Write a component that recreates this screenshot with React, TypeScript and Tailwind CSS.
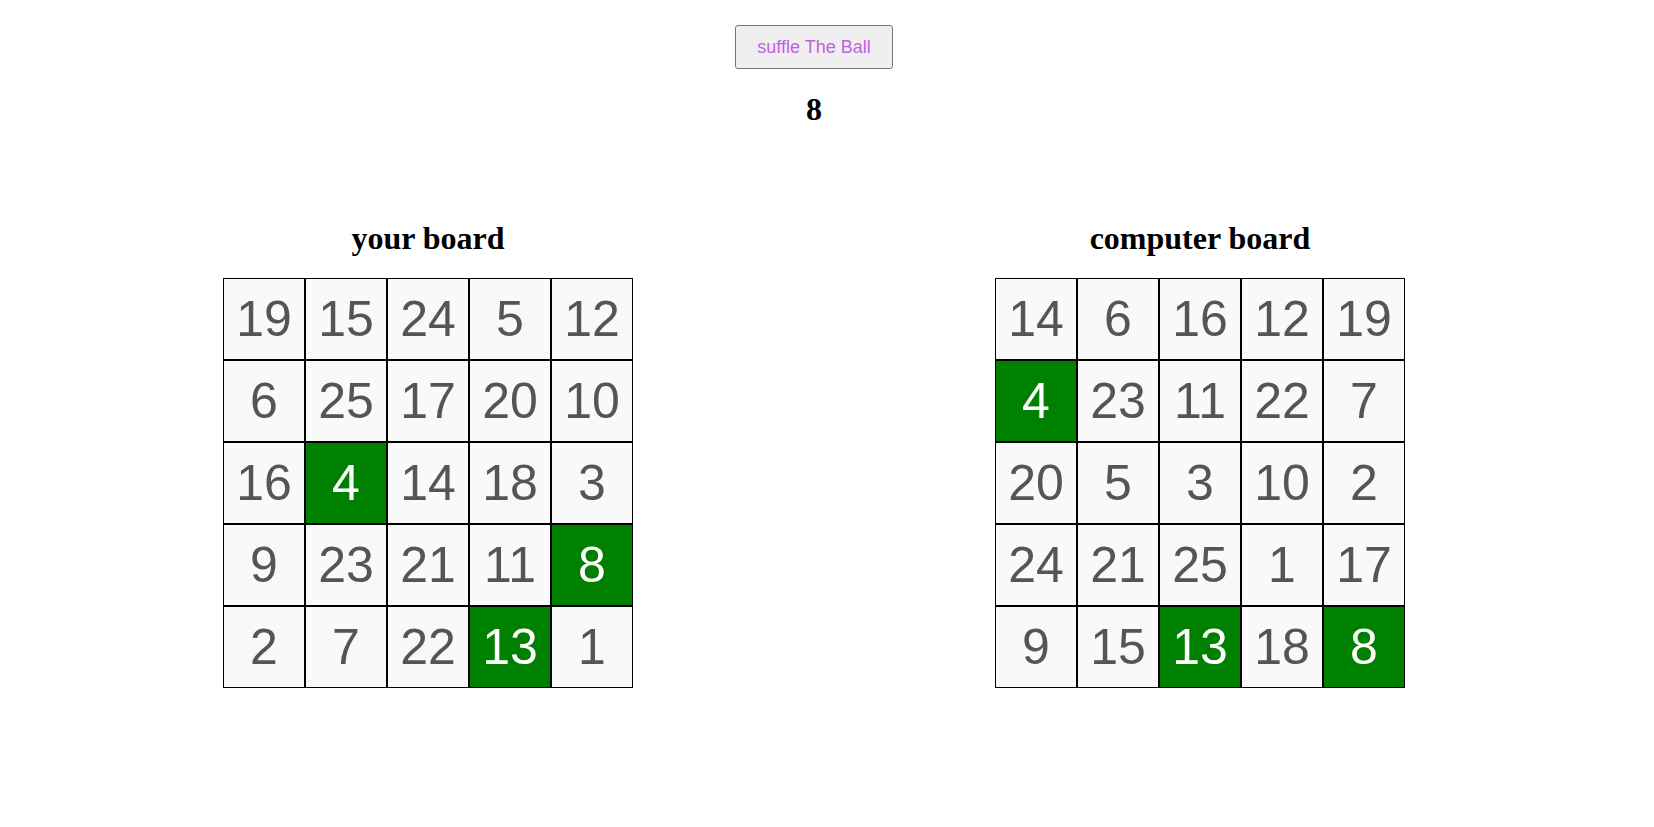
const yourBoard = [
  [19, 15, 24, 5, 12],
  [6, 25, 17, 20, 10],
  [16, 4, 14, 18, 3],
  [9, 23, 21, 11, 8],
  [2, 7, 22, 13, 1],
];

const computerBoard = [
  [14, 6, 16, 12, 19],
  [4, 23, 11, 22, 7],
  [20, 5, 3, 10, 2],
  [24, 21, 25, 1, 17],
  [9, 15, 13, 18, 8],
];

const drawn = [4, 8, 13];

function Board({ title, rows }: { title: string; rows: number[][] }) {
  return (
    <div className="flex flex-col items-center">
      <h2 className="font-['Liberation_Serif',serif] text-[32px] font-bold leading-[37px] text-black">
        {title}
      </h2>
      <div className="mt-[21px] flex flex-col">
        {rows.map((row, i) => (
          <div key={i} className="flex">
            {row.map((n) => {
              const hit = drawn.includes(n);
              return (
                <div
                  key={n}
                  className={
                    hit
                      ? "flex h-[82px] w-[82px] items-center justify-center border border-black bg-[#008000] font-['Liberation_Sans',sans-serif] text-[50px] text-white"
                      : "flex h-[82px] w-[82px] items-center justify-center border border-black bg-[#f9f9f9] font-['Liberation_Sans',sans-serif] text-[50px] text-[#555555]"
                  }
                >
                  {n}
                </div>
              );
            })}
          </div>
        ))}
      </div>
    </div>
  );
}

export default function App() {
  return (
    <div className="min-h-screen w-full bg-white">
      <div className="flex w-[1628px] flex-col items-center">
        <button className="mt-[25px] h-[44px] w-[158px] rounded-[3px] border border-[#767676] bg-[#efefef] font-['Liberation_Sans',sans-serif] text-[18px] text-[#c062e0]">
          suffle The Ball
        </button>
        <h1 className="mt-[22px] font-['Liberation_Serif',serif] text-[32px] font-bold leading-[37px] text-black">
          8
        </h1>
      </div>
      <div className="mt-[92px] flex gap-[362px] pl-[223px]">
        <Board title="your board" rows={yourBoard} />
        <Board title="computer board" rows={computerBoard} />
      </div>
    </div>
  );
}
